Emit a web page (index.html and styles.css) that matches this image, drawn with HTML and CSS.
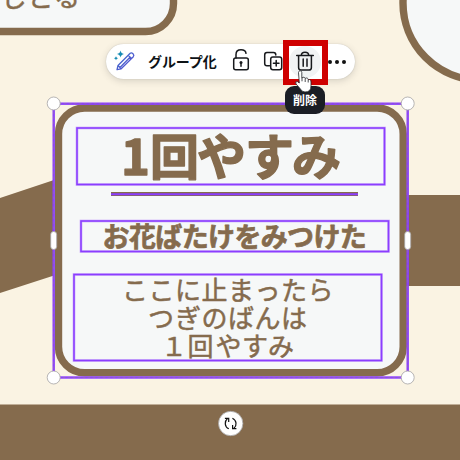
FILE: index.html
```html
<!DOCTYPE html>
<html lang="ja">
<head>
<meta charset="utf-8">
<title>すごろく</title>
<link rel="stylesheet" href="styles.css">
</head>
<body>
<main class="canvas">
  <svg class="board" width="460" height="460" viewBox="0 0 460 460">
    <path class="road" d="M0 198L54 180V275.500L0 293ZM400 195H460V286H400ZM0 404.500H460V460H0Z"/>
    <rect class="tile" x="-150" y="-120" width="323.500" height="151.500" rx="28"/>
    <circle class="tile" cx="480" cy="3" r="77"/>
    <text class="body-text" x="1 28 54" y="7">じどる</text>
    <rect class="tile" x="58.500" y="108" width="344.700" height="264.700" rx="26"/>
    <text class="title" x="121 150 197 245 292" y="174.500">1回やすみ</text>
    <text class="subtitle" x="102.500 129 155.300 181.700 208 234.400 260.700 287 313.400 339.700" y="247">お花ばたけをみつけた</text>
    <text class="body-text" x="122 148.500 175 201.500 228 254.500 281 307.500" y="300">ここに止まったら</text>
    <text class="body-text" x="148 175 201.500 228 254.500 281" y="328">つぎのばんは</text>
    <text class="body-text" x="161 187.500 215.500 242 268" y="356">１回やすみ</text>
    <path class="rule" d="M111 194H358"/>
    <path class="rule-core" d="M111 194.300H358"/>
    <g class="halo"><rect x="77" y="128" width="307.500" height="56.500"/><rect x="81" y="221" width="307.500" height="30.500"/><rect x="74" y="274.500" width="307.500" height="86"/></g>
    <g class="outline"><rect x="77" y="128" width="307.500" height="56.500"/><rect x="81" y="221" width="307.500" height="30.500"/><rect x="74" y="274.500" width="307.500" height="86"/></g>
    <rect class="selection" x="53.700" y="103.700" width="354" height="273.800"/>
    <rect class="selection-dash" x="53.700" y="103.700" width="354" height="273.800"/>
    <g class="handle">
      <circle cx="53.700" cy="103.500" r="6.500"/><circle cx="407.700" cy="103.500" r="6.500"/>
      <circle cx="53.700" cy="377.500" r="6.500"/><circle cx="407.700" cy="377.500" r="6.500"/>
      <rect x="50.700" y="231.500" width="6" height="18" rx="3"/><rect x="404.700" y="231.500" width="6" height="18" rx="3"/>
      <circle cx="230.700" cy="423.500" r="12.200"/>
    </g>
    <g class="rotate">
      <path d="M228.800 428.800C224.400 426.800 224.300 421.300 227.300 418.700M232.400 418.200C236.800 420.300 237.100 425.600 233.900 428.300"/>
      <path d="M224.900 418.300H228.700V422M236.400 428.700H232.600V425"/>
    </g>
  </svg>

  <div class="toolbar">
    <svg class="magic" width="24" height="24" viewBox="0 0 24 24">
      <defs><linearGradient id="ink" x1="0" y1="0" x2="1" y2="1"><stop offset="0" stop-color="#3979c8"/><stop offset="1" stop-color="#5f45d5"/></linearGradient></defs>
      <path class="spark" d="M7.500 .500Q8 3.500 11 4Q8 4.500 7.500 7.500Q7 4.500 4 4Q7 3.500 7.500 .500ZM3 6.200Q3.300 7.800 5 8.200Q3.300 8.500 3 10.200Q2.700 8.500 1 8.200Q2.700 7.800 3 6.200Z"/>
      <path class="pencil" d="M5 15.500L17.200 3.300Q18.500 2.300 20 3.800Q21.500 5.300 20.300 6.700L8.200 18.800L4 19.700ZM15.200 5.300L18.500 8.500M5 15.500L8.200 18.800M7 17.500L17 7.200"/>
    </svg>
    <span class="group">グループ化</span>
    <svg class="lock icon" width="22" height="24" viewBox="0 0 22 24"><rect x="3.700" y="9" width="14.600" height="11.800" rx="2"/><path d="M6 9V5.500Q6 .800 11 .800Q15.500 .800 16 4.300M11 14V17.300"/><circle class="dot" cx="11" cy="13.500" r="1.500"/></svg>
    <svg class="copy icon" width="22" height="24" viewBox="0 0 22 24"><path d="M7.500 15.700H5Q2.700 15.700 2.700 13.400V4.900Q2.700 2.600 5 2.600H11.500Q13.800 2.600 13.800 5"/><rect x="8.700" y="7" width="11" height="12.800" rx="2.200"/><path d="M14.200 10.500V16M11.400 13.250H17"/></svg>
    <div class="trash"><svg class="icon" width="22" height="24" viewBox="0 0 22 24"><path d="M2.700 5.500H19.300M7.300 5.500Q7.300 2.300 11 2.300Q14.700 2.300 14.700 5.500M4.600 5.500V17.500Q4.600 20.100 7.200 20.100H14.800Q17.400 20.100 17.400 17.500V5.500M9.200 9V16.300M13 9V16.300"/></svg></div>
    <div class="more"><i></i><i></i><i></i></div>
  </div>
  <div class="highlight"></div>
  <div class="tooltip">削除</div>
  <svg class="cursor" width="20" height="24" viewBox="0 0 20 24"><path d="M3.500 2.500C3.500 .300 6.800 .300 6.800 2.500V8Q9.500 6.200 10 8.500Q12.800 7 13.200 9.700Q16 8.800 16 12V16Q16 22 10 22Q6.800 22 5 18.500L1 14Q-.300 11.500 2.300 11.500L4.300 13Z"/><path class="crease" d="M7 8V11.300M10.200 9V12M13.200 10V12.500"/></svg>
</main>
</body>
</html>
```
FILE: styles.css
```css
body { margin: 0; font-family: "Noto Sans CJK JP", sans-serif; }
.canvas { position: relative; width: 460px; height: 460px; overflow: hidden; background: #faf3e3; }
.board { display: block; }
.road { fill: #856b4d; }
.tile { fill: #f6f8f8; stroke: #856b4d; stroke-width: 7.4; }
.board text { fill: #856b4d; stroke: #856b4d; stroke-linejoin: round; }
.board .title { font-size: 49px; font-weight: 700; stroke-width: 1.4; }
.board .subtitle { font-size: 27px; font-weight: 700; stroke-width: .7; }
.board .body-text { font-size: 26px; font-weight: 400; stroke-width: .5; }
.rule { stroke: #856b4d; stroke-width: 4; }
.rule-core { stroke: #8b3dff; stroke-width: 2; }
.halo { fill: none; stroke: #c7a4fb; stroke-width: 2.6; }
.outline { fill: none; stroke: #8b3dff; stroke-width: 1.5; }
.selection { fill: none; stroke: #8b3dff; stroke-width: 2.4; }
.selection-dash { fill: none; stroke: #9568bd; stroke-width: .8; stroke-dasharray: 3 2; }
.handle { fill: #fff; stroke: #a5a3a5; stroke-width: .8; }
.rotate { fill: none; stroke: #111; stroke-width: 1.2; }
.toolbar { position: absolute; left: 106px; top: 44px; width: 249px; height: 35px; box-sizing: border-box; padding-left: 7px; display: flex; align-items: center; border-radius: 18px; background: #fff; box-shadow: 0 2px 7px #40404030, 0 0 1px #40404050; }
.toolbar svg { flex: none; }
.spark { fill: #158bb4; }
.pencil { fill: none; stroke: url(#ink); stroke-width: 1.3; stroke-linejoin: round; }
.magic { margin-top: 1px; }
.group { width: 70px; margin-left: 11px; margin-top: -1px; font-size: 14px; line-height: 20px; font-weight: 700; letter-spacing: -.1px; white-space: nowrap; color: #0d1216; }
.icon { fill: none; stroke: #17191c; stroke-width: 1.5; stroke-linecap: round; stroke-linejoin: round; }
.icon .dot { fill: #17191c; stroke: none; }
.lock { margin-left: 12px; margin-top: -1px; }
.copy { margin-left: 10px; }
.trash { display: flex; align-items: center; justify-content: center; width: 32px; height: 32px; margin-left: 5px; border-radius: 50%; background: #f1f3f4; }
.more { display: flex; gap: 3px; margin-left: 7px; }
.more i { width: 4px; height: 4px; border-radius: 50%; background: #111; }
.highlight { position: absolute; left: 283px; top: 40px; width: 45px; height: 45px; box-sizing: border-box; border: 6px solid #cf0000; }
.tooltip { position: absolute; left: 285px; top: 86px; width: 40px; height: 28px; border-radius: 9px; background: #1b1e25; color: #fff; font-size: 12px; font-weight: 700; line-height: 27px; text-align: center; }
.cursor { position: absolute; left: 295px; top: 70px; fill: #fff; stroke: #202226; stroke-width: .8; }
.cursor .crease { fill: none; }
```
